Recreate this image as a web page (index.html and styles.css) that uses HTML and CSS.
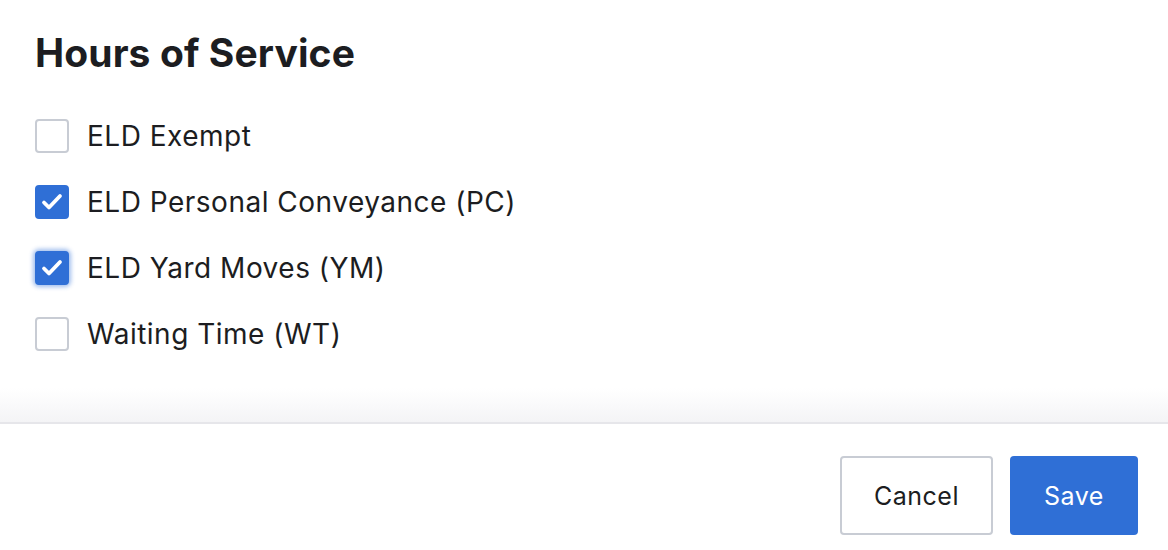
FILE: index.html
```html
<!DOCTYPE html>
<html>
<head>
<meta charset="utf-8">
<link rel="stylesheet" href="styles.css">
</head>
<body>
<div class="modal">
  <div class="content">
    <h1 class="title">Hours of Service</h1>
    <ul class="options">
      <li class="option"><span class="box"></span><span class="label">ELD Exempt</span></li>
      <li class="option"><span class="box checked"><svg viewBox="0 0 30 30" width="30" height="30"><path d="M7 15.5l5 5 11-11.5" fill="none" stroke="#fff" stroke-width="3.8" stroke-linecap="round" stroke-linejoin="round"/></svg></span><span class="label">ELD Personal Conveyance (PC)</span></li>
      <li class="option"><span class="box checked focus"><svg viewBox="0 0 30 30" width="30" height="30"><path d="M7 15.5l5 5 11-11.5" fill="none" stroke="#fff" stroke-width="3.8" stroke-linecap="round" stroke-linejoin="round"/></svg></span><span class="label">ELD Yard Moves (YM)</span></li>
      <li class="option"><span class="box"></span><span class="label">Waiting Time (WT)</span></li>
    </ul>
  </div>
  <div class="footer">
    <button class="btn cancel">Cancel</button>
    <button class="btn save">Save</button>
  </div>
</div>
</body>
</html>
```
FILE: styles.css
```css
* { box-sizing: border-box; }
html, body { margin: 0; padding: 0; background: #fff; }
body { font-family: "Inter", "Liberation Sans", sans-serif; color: #1c1d21; width: 1168px; height: 550px; overflow: hidden; }
.modal { display: flex; flex-direction: column; height: 550px; }
.content { height: 422px; padding: 30px 35px 0; background: linear-gradient(to bottom, #fff 0, #fff 388px, #f4f4f6 422px); }
.title { margin: 0; font-size: 39px; font-weight: 700; line-height: 46px; letter-spacing: 0.1px; }
.options { list-style: none; margin: 0; padding: 0; margin-top: 43px; display: flex; flex-direction: column; gap: 32px; }
.option { display: flex; align-items: center; height: 34px; }
.box { width: 34px; height: 34px; border: 2px solid #c8ccd4; border-radius: 4px; background: #fff; display: flex; align-items: center; justify-content: center; flex: none; }
.box.checked { background: #2f6fd6; border-color: #2f6fd6; }
.box.focus { box-shadow: 0 0 4px 2px rgba(47,111,214,0.45); }
.label { margin-left: 18px; font-size: 28px; letter-spacing: 0.5px; color: #1c1d21; }
.footer { border-top: 2px solid #e6e6ea; flex: 1; display: flex; justify-content: flex-end; align-items: flex-start; padding: 32px 30px 0 0; gap: 17px; }
.btn { font-family: inherit; font-size: 25px; height: 79px; border-radius: 4px; letter-spacing: 0.5px; cursor: pointer; }
.cancel { width: 153px; background: #fff; border: 2px solid #c8ccd4; color: #1c1d21; }
.save { width: 128px; background: #2f6fd6; border: none; color: #fff; }
```
